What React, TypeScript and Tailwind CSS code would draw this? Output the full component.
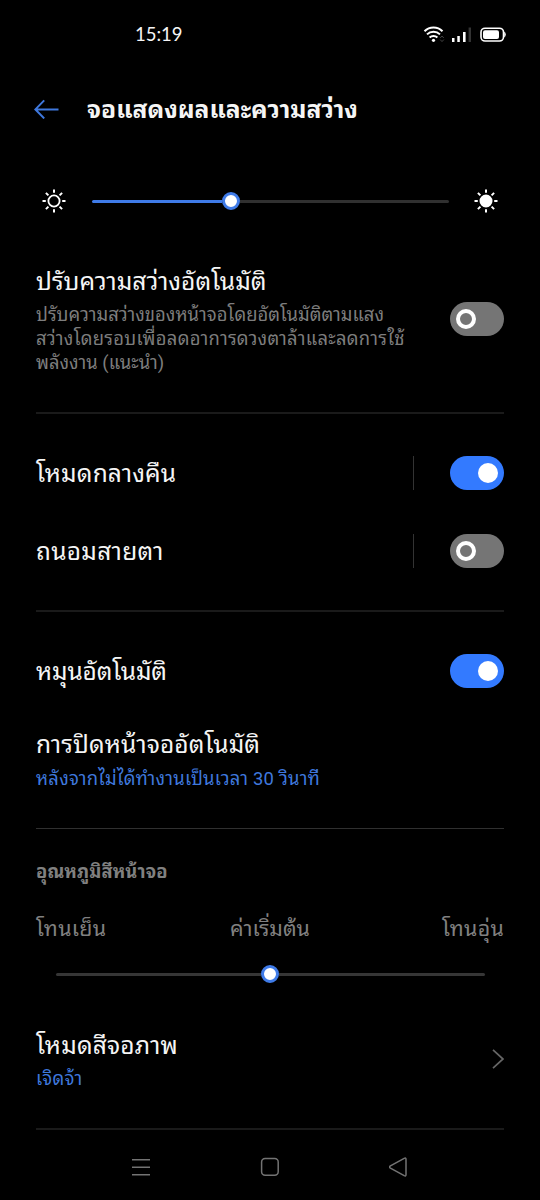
import React from "react";

function Toggle({ on }: { on: boolean }) {
  return (
    <div
      role="switch"
      aria-checked={on}
      className={`flex h-[34px] w-[54px] shrink-0 items-center rounded-full ${on ? "justify-end bg-[#337aff] pr-[6px]" : "justify-start bg-[#757575] pl-[6px]"}`}
    >
      <div className={on ? "size-5 rounded-full bg-white" : "size-5 rounded-full border-4 border-white"} />
    </div>
  );
}

function Thumb() {
  return <div className="size-[18px] shrink-0 rounded-full border-[3px] border-[#3f7be8] bg-white" />;
}

function Sun({ filled }: { filled: boolean }) {
  return (
    <svg className="size-6 shrink-0" viewBox="0 0 24 24" fill="none" stroke="#fff" strokeWidth="2">
      <circle cx="12" cy="12" r="5.6" strokeWidth="1.8" fill={filled ? "#fff" : "none"} />
      <path d="M12 .5v3.3M12 20.2v3.3M.5 12h3.3M20.2 12h3.3M3.9 3.9l2.5 2.5M17.6 17.6l2.5 2.5M3.9 20.1l2.5-2.5M17.6 6.4l2.5-2.5" />
    </svg>
  );
}

function Divider({ thin }: { thin?: boolean }) {
  return <div className={thin ? "mx-9 h-px bg-[#303030]" : "mx-9 h-[2px] bg-[#1a1a1a]"} />;
}

function Row({ label, on, split, tracking }: { label: string; on: boolean; split?: boolean; tracking: string }) {
  return (
    <div className="flex h-[78px] items-center px-9">
      <div className={`flex-1 whitespace-nowrap pt-[2px] text-[24.5px] leading-8 ${tracking}`}>{label}</div>
      {split && <div className="mr-9 h-[34px] w-px bg-[#333]" />}
      <Toggle on={on} />
    </div>
  );
}

export default function App() {
  return (
    <div className="flex h-[1200px] w-[540px] flex-col overflow-hidden bg-black font-['Roboto','Noto_Sans_Thai_Looped','Noto_Looped_Thai','Noto_Sans_Thai_UI','Noto_Sans_Thai','Noto_Sans',sans-serif] text-[#f5f5f5]">
      <div className="flex h-[68px] items-center justify-between pr-[34px] pl-[135px]">
        <span className="font-['Lato','Roboto',sans-serif] text-[18.5px] leading-6">15:19</span>
        <svg className="h-5 w-[84px]" viewBox="422 24 84 20" fill="none">
          <g stroke="#fff" strokeWidth="2">
            <path d="M424.5 31.2a13 13 0 0 1 18 0M427 34.4a9.4 9.4 0 0 1 13 0M429.6 37.5a5.6 5.6 0 0 1 7.8 0" />
          </g>
          <circle cx="433.5" cy="40.3" r="1.6" fill="#fff" />
          <path d="m440.2 38 1.8-2 1.8 2M440.2 39.6l1.8 2 1.8-2" stroke="#444" />
          <path d="M452 38h2.5v4H452zM457.3 36h2.5v6h-2.5zM463 32h2.6v10H463z" fill="#fff" />
          <path d="M468.6 27.5h2.4V42h-2.4z" fill="#333" />
          <rect x="481" y="28.2" width="22.5" height="12.8" rx="4" stroke="#fff" strokeWidth="1.6" />
          <rect x="483" y="30.2" width="16" height="8.8" rx="2" fill="#fff" />
          <path d="M504.2 31.5q1.6 1 1.6 3t-1.6 3z" fill="#fff" />
        </svg>
      </div>

      <div className="flex h-[82px] items-center pl-[34px]">
        <svg className="h-5 w-[25px]" viewBox="0 0 25 20" fill="none" stroke="#3f78dd" strokeWidth="2">
          <path d="M10.2 1.4 1.4 10.4l8.8 9M1.5 10.4h23" />
        </svg>
        <h1 className="ml-7 whitespace-nowrap pt-[2px] text-[24.6px] leading-8 font-bold">จอแสดงผลและความสว่าง</h1>
      </div>

      <div className="flex h-[102px] items-center justify-between px-[42px]">
        <Sun filled={false} />
        <div className="flex w-[357px] items-center">
          <div className="h-[3px] w-[130.5px] rounded-l-full bg-[#3f7be8]" />
          <Thumb />
          <div className="h-[3px] flex-1 rounded-r-full bg-[#303030]" />
        </div>
        <Sun filled />
      </div>

      <div className="flex h-[160px] justify-between px-9">
        <div className="whitespace-nowrap pt-[14px]">
          <div className="text-[24.6px] leading-8">ปรับความสว่างอัตโนมัติ</div>
          <div className="mt-[5px] text-[18.4px] leading-6 text-[#7d7d7d]">
            <div className="tracking-[0.03px]">ปรับความสว่างของหน้าจอโดยอัตโนมัติตามแสง</div>
            <div className="tracking-[0.28px]">สว่างโดยรอบเพื่อลดอาการดวงตาล้าและลดการใช้</div>
            <div>พลังงาน (แนะนำ)</div>
          </div>
        </div>
        <div className="pt-[50px]">
          <Toggle on={false} />
        </div>
      </div>
      <Divider />

      <div className="h-[196px] pt-5">
        <Row label="โหมดกลางคืน" on split tracking="tracking-[0.15px]" />
        <Row label="ถนอมสายตา" on={false} split tracking="tracking-[0.3px]" />
      </div>
      <Divider />

      <div className="h-[216px] whitespace-nowrap pt-5">
        <Row label="หมุนอัตโนมัติ" on tracking="tracking-[-0.14px]" />
        <div className="px-9 pt-[19px]">
          <div className="text-[24.5px] leading-8 tracking-[0.1px]">การปิดหน้าจออัตโนมัติ</div>
          <div className="mt-[6px] text-[18.4px] leading-6 tracking-[0.22px] text-[#3f78dd]">หลังจากไม่ได้ทำงานเป็นเวลา 30 วินาที</div>
        </div>
      </div>
      <Divider thin />

      <div className="flex h-[299px] flex-col whitespace-nowrap">
        <div className="px-9 pt-[31px] text-[18.4px] leading-6 font-bold tracking-[0.08px] text-[#808080]">อุณหภูมิสีหน้าจอ</div>
        <div className="mt-[29px] grid h-8 grid-cols-3 px-9 text-[21.4px] leading-8 text-[#808080]">
          <div className="tracking-[0.3px]">โทนเย็น</div>
          <div className="text-center">ค่าเริ่มต้น</div>
          <div className="text-right tracking-[0.25px]">โทนอุ่น</div>
        </div>
        <div className="mx-auto mt-[20px] flex h-[18px] w-[429px] items-center">
          <div className="h-[3px] flex-1 rounded-l-full bg-[#363636]" />
          <Thumb />
          <div className="h-[3px] flex-1 rounded-r-full bg-[#363636]" />
        </div>
        <div className="mt-[46px] flex items-center justify-between px-9">
          <div className="pt-px">
            <div className="text-[24.5px] leading-8 tracking-[0.18px]">โหมดสีจอภาพ</div>
            <div className="mt-[5px] text-[18.4px] leading-6 tracking-[0.3px] text-[#3f78dd]">เจิดจ้า</div>
          </div>
          <svg className="mb-[3px] h-5 w-3" viewBox="0 0 12 20" fill="none" stroke="#666" strokeWidth="1.7">
            <path d="m1 .8 10 9.2L1 19.2" />
          </svg>
        </div>
      </div>
      <Divider />

      <div className="flex flex-1 items-center justify-between px-[131px] pt-[4px]">
        <svg className="h-5 w-5" viewBox="131 1157 20 20" stroke="#737373" strokeWidth="1.5">
          <path d="M132 1159.7h18M132 1167.2h18M132 1174.7h18" />
        </svg>
        <svg className="h-5 w-5" viewBox="0 0 20 20" fill="none" stroke="#737373" strokeWidth="1.5">
          <rect x="1.6" y="1.6" width="16.6" height="16.6" rx="3.5" />
        </svg>
        <svg className="h-[22px] w-5" viewBox="0 0 20 22" fill="none" stroke="#737373" strokeWidth="1.5" strokeLinejoin="round">
          <path d="M17 3.4v15.2q0 2-1.8 1.1L1.4 12.2q-1.6-1.2 0-2.4l13.8-7.5q1.8-.9 1.8 1.1Z" />
        </svg>
      </div>
    </div>
  );
}
